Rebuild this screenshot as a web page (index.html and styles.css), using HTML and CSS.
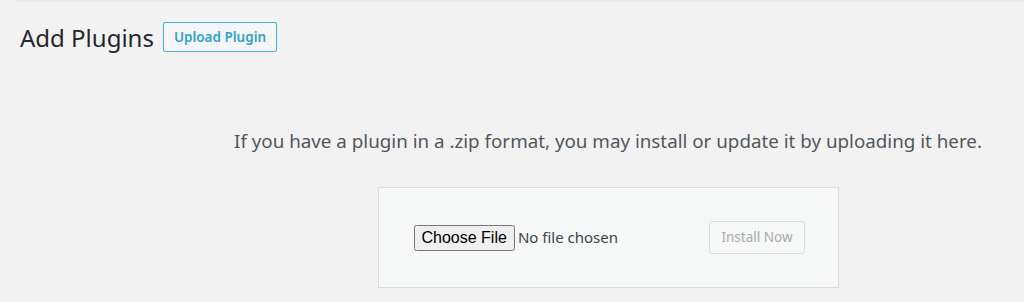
FILE: index.html
```html
<!DOCTYPE html>
<html lang="en">
<head>
  <meta charset="UTF-8" />
  <title>Add Plugins</title>
  <link rel="stylesheet" href="styles.css">
</head>
<body>
  <div class="topbar"></div>
  <div class="wrap">
    <div class="page-header">
      <h1>Add Plugins</h1>
      <a class="page-title-action" href="#">Upload Plugin</a>
    </div>

    <div class="upload-plugin">
      <p class="install-help">If you have a plugin in a .zip format, you may install or update it by uploading it here.</p>
      <form class="upload-form" onsubmit="return false">
        <input type="file" name="pluginzip">
        <button class="button" type="submit" disabled>Install Now</button>
      </form>
    </div>
  </div>
</body>
</html>
```

FILE: styles.css
```css
body {
  margin: 0;
  background: #f2f2f2;
  color: #23282d;
  font-family: "Noto Sans", "Open Sans", sans-serif;
  height: 302px;
  overflow: hidden;
}

.topbar {
  height: 2px;
  margin-left: 16px;
  background: #ebebeb;
}

.wrap {
  padding: 0 20px;
}

.page-header {
  display: flex;
  align-items: flex-start;
  gap: 9px;
  padding-top: 20px;
}

h1 {
  margin: 0;
  font-size: 24px;
  font-weight: 400;
  line-height: 32px;
  color: #23282d;
}

.page-title-action {
  display: inline-block;
  border: 1px solid #3cb2de;
  border-radius: 2px;
  background: #f5f5f5;
  color: #2ea2cc;
  font-size: 13.5px;
  font-weight: 600;
  line-height: 28px;
  padding: 0 10px;
  text-decoration: none;
}

.upload-plugin {
  margin: 0 -20px 0 172px;
  text-align: center;
}

.install-help {
  margin: 73px 0 0;
  font-size: 18.8px;
  line-height: 28px;
  color: #50575e;
}

.upload-form {
  display: flex;
  justify-content: space-between;
  align-items: center;
  width: 461px;
  height: 101px;
  box-sizing: border-box;
  margin: 32px auto 0;
  padding: 0 33px 0 35px;
  background: #f6f7f7;
  border: 1px solid #dcdcde;
  text-align: left;
}

.upload-form input[type=file] {
  font-family: "Noto Sans", sans-serif;
  font-size: 15px;
  color: #3c434a;
}

.upload-form input[type=file]::file-selector-button {
  font-family: "Liberation Sans", Arial, sans-serif;
  font-size: 16px;
  padding: 2px 6px;
  margin-right: 3px;
}

.button {
  font-family: inherit;
  font-size: 13.5px;
  line-height: 31px;
  padding: 0 11px;
  border: 1px solid #dcdcde;
  border-radius: 3px;
  background: #f6f7f7;
  color: #a7aaad;
}
```
